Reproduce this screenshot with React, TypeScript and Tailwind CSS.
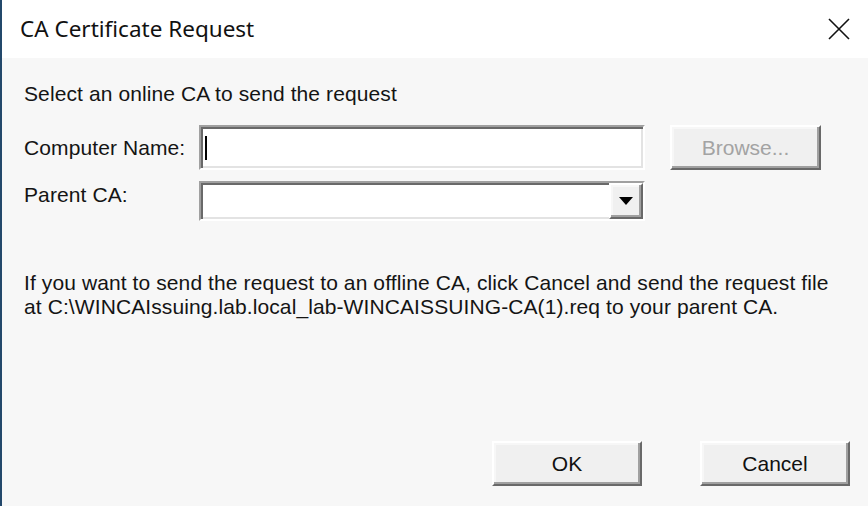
import React from 'react';

const sunken =
  'border-2 border-t-[#a0a0a0] border-l-[#a0a0a0] border-r-[#ffffff] border-b-[#ffffff] shadow-[inset_2px_2px_0_#696969,inset_-2px_-2px_0_#e3e3e3]';

const raised =
  'border-2 border-t-[#ffffff] border-l-[#ffffff] border-r-[#696969] border-b-[#696969] shadow-[inset_-2px_-2px_0_#a0a0a0,inset_2px_2px_0_#f7f7f7]';

const Button: React.FC<{ label: string; disabled?: boolean; className?: string }> = ({
  label,
  disabled,
  className,
}) => (
  <button
    className={`${raised} bg-[#f0f0f0] flex items-center justify-center text-[21px] ${
      disabled ? 'text-[#a3a3a3]' : 'text-[#111]'
    } ${className ?? ''}`}
  >
    {label}
  </button>
);

export default function App() {
  return (
    <div
      className="w-[868px] h-[506px] flex flex-col bg-[#f7f7f7] border-l-2 border-[#23486b] overflow-hidden"
      style={{ fontFamily: '"Liberation Sans", Arial, sans-serif' }}
    >
      {/* title bar */}
      <div className="h-[58px] bg-white flex items-center justify-between pl-[18px] pr-[16px] shrink-0">
        <span
          className="text-[22.5px] text-[#111]"
          style={{ fontFamily: '"Noto Sans", "Open Sans", sans-serif' }}
        >
          CA Certificate Request
        </span>
        <svg width="24" height="24" viewBox="0 0 24 24" className="mr-[1px]">
          <path d="M2 2 L22 22 M22 2 L2 22" stroke="#111" strokeWidth="1.6" />
        </svg>
      </div>

      {/* body */}
      <div className="flex-1 flex flex-col pl-[22px] text-[21px] tracking-[0.1px] text-[#141414]">
        <div className="mt-[24px] leading-[24px]">Select an online CA to send the request</div>

        <div className="mt-[19px] flex items-center">
          <div className="w-[175px]">Computer Name:</div>
          <div className={`${sunken} bg-white w-[446px] h-[45px] flex items-center pl-[4px]`}>
            <div className="w-[2px] h-[24px] bg-black" />
          </div>
          <Button label="Browse..." disabled className="ml-[25px] w-[151px] h-[45px] tracking-normal" />
        </div>

        <div className="mt-[11px] flex items-start">
          <div className="w-[175px] leading-[24px] mt-[2px]">Parent CA:</div>
          <div className={`${sunken} bg-white w-[446px] h-[40px] flex justify-end`}>
            <div className={`${raised} bg-[#f0f0f0] w-[34px] h-full flex items-center justify-center`}>
              <svg width="14" height="8" viewBox="0 0 14 8">
                <path d="M0 0 H14 L7 8 Z" fill="#000" />
              </svg>
            </div>
          </div>
        </div>

        <div className="mt-[50px] leading-[24px]">
          <div>If you want to send the request to an offline CA, click Cancel and send the request file</div>
          <div>at C:\WINCAIssuing.lab.local_lab-WINCAISSUING-CA(1).req to your parent CA.</div>
        </div>

        <div className="mt-auto mb-[20px] flex justify-end gap-[58px] pr-[18px]">
          <Button label="OK" className="w-[150px] h-[45px] tracking-normal" />
          <Button label="Cancel" className="w-[150px] h-[45px] tracking-normal" />
        </div>
      </div>
    </div>
  );
}
